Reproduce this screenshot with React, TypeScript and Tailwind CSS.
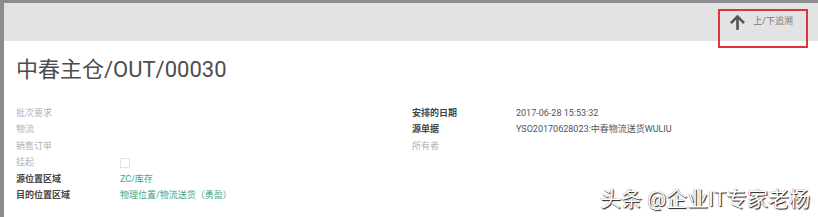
import React from "react";
import { FaArrowUp } from "react-icons/fa";

const font = { fontFamily: 'Roboto, "Noto Sans CJK SC", sans-serif' };

function Row({ label, bold, children }: { label: string; bold?: boolean; children?: React.ReactNode }) {
  return (
    <div className="flex h-[16.5px] items-center">
      <div className={`w-[104px] shrink-0 ${bold ? "font-bold text-[#444]" : "text-[#b3b3b3]"}`}>{label}</div>
      <div className="flex items-center">{children}</div>
    </div>
  );
}

export default function App() {
  return (
    <div
      className="relative w-[818px] h-[217px] overflow-hidden bg-white border-l-4 border-t-[3px] border-[#8c8c8c] text-[9px]"
      style={font}
    >
      <div className="h-[38px] bg-[#e3e3e3] flex items-center justify-end pr-[25px]">
        <div className="flex items-center gap-[7px]">
          <FaArrowUp className="w-[17px] h-[17px] text-[#555]" />
          <span className="text-[9px] text-[#777]">上/下追溯</span>
        </div>
      </div>
      <div className="absolute left-[714px] top-[6px] w-[90px] h-[39px] border-2 border-[#e0343c]" />

      <div className="pl-[12px] pt-[15px]">
        <div className="text-[22px] leading-[28px] text-[#4d4d4d]">中春主仓/OUT/00030</div>
        <div className="mt-[21px] flex">
          <div className="w-[396px] shrink-0">
            <Row label="批次要求" />
            <Row label="物流" />
            <Row label="销售订单" />
            <Row label="挂起">
              <div className="w-[10px] h-[10px] border border-[#e2e2e2] bg-white" />
            </Row>
            <Row label="源位置区域" bold>
              <span className="text-[#3fa68f]">ZC/库存</span>
            </Row>
            <Row label="目的位置区域" bold>
              <span className="text-[#3fa68f]">物理位置/物流送货（勇盈）</span>
            </Row>
          </div>
          <div>
            <Row label="安排的日期" bold>
              <span className="text-[#555]">2017-06-28 15:53:32</span>
            </Row>
            <Row label="源单据" bold>
              <span className="text-[#555]">YSO20170628023:中春物流送货WULIU</span>
            </Row>
            <Row label="所有者" />
          </div>
        </div>
      </div>

      <div className="absolute left-[596px] top-[182px] text-[21px] leading-[28px] text-white [text-shadow:1px_1px_1px_rgba(0,0,0,0.9),-0.5px_-0.5px_0.5px_rgba(0,0,0,0.4)]">
        头条 @企业IT专家老杨
      </div>
    </div>
  );
}
